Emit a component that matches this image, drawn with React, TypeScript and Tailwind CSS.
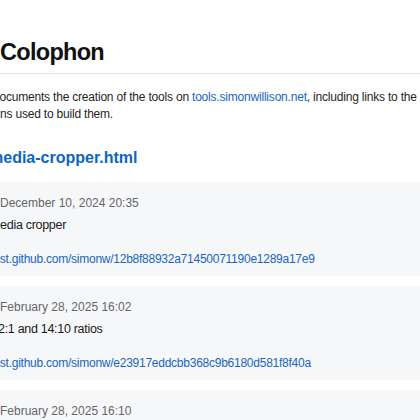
import * as React from 'react';

interface Entry {
  date: string;
  text: string;
  textShift: string;
  gist: string;
}

const entries: Entry[] = [
  {
    date: 'December 10, 2024 20:35',
    text: 'media cropper',
    textShift: '-ml-[10px]',
    gist: 'gist.github.com/simonw/12b8f88932a71450071190e1289a17e9',
  },
  {
    date: 'February 28, 2025 16:02',
    text: '2:1 and 14:10 ratios',
    textShift: '-ml-[2px]',
    gist: 'gist.github.com/simonw/e23917eddcbb368c9b6180d581f8f40a',
  },
  {
    date: 'February 28, 2025 16:10',
    text: '',
    textShift: '',
    gist: '',
  },
];

function CommitCard({ entry }: { entry: Entry }) {
  return (
    <div className="-ml-6 -mr-6 h-[94px] rounded-md bg-[#f6f7f9] pl-[24px] pt-[11px]">
      <div className="text-[12px] leading-[20px] text-[#666]">{entry.date}</div>
      {entry.text && (
        <div
          className={`mt-[2px] text-[12.5px] leading-[20px] tracking-[-0.3px] text-[#1a1a1a] whitespace-nowrap ${entry.textShift}`}
        >
          {entry.text}
        </div>
      )}
      {entry.gist && (
        <div className="mt-[14px] -ml-[9px] text-[12px] leading-[20px] tracking-[-0.25px] whitespace-nowrap">
          <a className="text-[#1766c2]">{entry.gist}</a>
        </div>
      )}
    </div>
  );
}

export default function App() {
  return (
    <div className="h-[420px] w-[420px] overflow-hidden bg-white font-['Liberation_Sans',Arial,sans-serif]">
      <h1 className="pt-[38px] pb-[7px] text-[23.5px] font-bold leading-[28px] tracking-[-0.7px] text-[#111] border-b border-[#e5e5e5]">
        Colophon
      </h1>
      <p className="mt-[15px] -ml-[7px] text-[12px] leading-[17px] tracking-[-0.2px] text-[#1f1f1f] whitespace-nowrap">
        documents the creation of the tools on{' '}
        <a className="text-[#1766c2]">tools.simonwillison.net</a>, including links to the
        <br />
        <span className="ml-[7px]">ns used to build them.</span>
      </p>
      <h2 className="mt-[24px] -ml-[11px] text-[16px] font-bold leading-[22px] text-[#0b66c3] whitespace-nowrap">
        media-cropper.html
      </h2>
      <div className="mt-[13px] flex flex-col gap-[10px]">
        {entries.map((e) => (
          <CommitCard key={e.date} entry={e} />
        ))}
      </div>
    </div>
  );
}
